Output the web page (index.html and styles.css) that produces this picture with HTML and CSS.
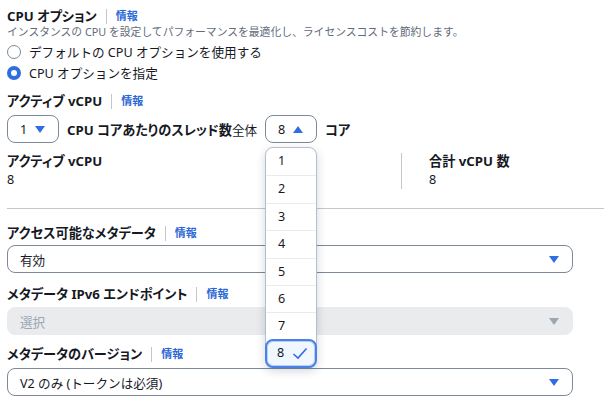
FILE: index.html
```html
<!DOCTYPE html>
<html lang="ja">
<head>
    <meta charset="UTF-8">
    <title>CPU オプション</title>
    <link rel="stylesheet" href="styles.css">
</head>
<body>
    <div class="page">
        <div class="label-row first">
            <span class="label">CPU オプション</span><span class="sep"></span><a class="info">情報</a>
        </div>
        <div class="desc">インスタンスの CPU を設定してパフォーマンスを最適化し、ライセンスコストを節約します。</div>
        <div class="radios">
            <label class="radio"><span class="circle"></span>デフォルトの CPU オプションを使用する</label>
            <label class="radio"><span class="circle checked"></span>CPU オプションを指定</label>
        </div>

        <div class="label-row vcpu">
            <span class="label">アクティブ vCPU</span><span class="sep"></span><a class="info">情報</a>
        </div>
        <div class="core-row">
            <div class="select small">
                <span>1</span>
                <svg class="caret" width="10" height="7" viewBox="0 0 10 7"><polygon points="0,0 10,0 5,7"/></svg>
            </div>
            <span class="label">CPU コアあたりのスレッド数</span><span class="plain">全体</span>
            <div class="select-wrap">
                <div class="select small">
                    <span>8</span>
                    <svg class="caret" width="10" height="7" viewBox="0 0 10 7"><polygon points="0,7 10,7 5,0"/></svg>
                </div>
                <ul class="menu">
                    <li>1</li>
                    <li>2</li>
                    <li>3</li>
                    <li>4</li>
                    <li>5</li>
                    <li>6</li>
                    <li>7</li>
                    <li class="selected">8
                        <svg class="check" width="16" height="13" viewBox="0 0 16 13"><polyline points="1.5,7 6,11 14.5,1.5"/></svg>
                    </li>
                </ul>
            </div>
            <span class="label">コア</span>
        </div>

        <div class="stats">
            <div class="stat">
                <div class="label">アクティブ vCPU</div>
                <div class="value">8</div>
            </div>
            <div class="stat total">
                <div class="label">合計 vCPU 数</div>
                <div class="value">8</div>
            </div>
        </div>
    </div>

    <hr class="divider">

    <div class="page">
        <div class="label-row meta1">
            <span class="label">アクセス可能なメタデータ</span><span class="sep"></span><a class="info">情報</a>
        </div>
        <div class="select wide">
            <span>有効</span>
            <svg class="caret" width="10" height="7" viewBox="0 0 10 7"><polygon points="0,0 10,0 5,7"/></svg>
        </div>

        <div class="label-row meta2">
            <span class="label">メタデータ IPv6 エンドポイント</span><span class="sep"></span><a class="info">情報</a>
        </div>
        <div class="select wide disabled">
            <span>選択</span>
            <svg class="caret" width="10" height="7" viewBox="0 0 10 7"><polygon points="0,0 10,0 5,7"/></svg>
        </div>

        <div class="label-row meta3">
            <span class="label">メタデータのバージョン</span><span class="sep"></span><a class="info">情報</a>
        </div>
        <div class="select wide">
            <span>V2 のみ (トークンは必須)</span>
            <svg class="caret" width="10" height="7" viewBox="0 0 10 7"><polygon points="0,0 10,0 5,7"/></svg>
        </div>
    </div>
</body>
</html>
```

FILE: styles.css
```css
body {
    margin: 0;
    background: #ffffff;
    color: #16191f;
    font-family: "Noto Sans", "Noto Sans CJK JP", sans-serif;
    font-size: 12.6px;
}
.page {
    padding: 0 31px 0 7px;
}
.label {
    font-weight: bold;
    font-size: 13.2px;
    font-feature-settings: "palt";
}
.label-row {
    display: flex;
    align-items: center;
    height: 16px;
    line-height: 16px;
}
.label-row.first {
    padding-top: 8px;
}
.label-row.vcpu {
    margin-top: 10px;
}
.label-row.meta1 {
    margin-top: 16px;
}
.label-row.meta2 {
    margin-top: 13px;
}
.label-row.meta3 {
    margin-top: 11px;
}
.sep {
    display: inline-block;
    width: 1px;
    height: 15px;
    background: #c6c6cd;
    margin: 0 9px;
}
.info {
    color: #2d67d6;
    font-weight: bold;
    font-size: 11px;
}
.desc {
    color: #5f6b7a;
    font-size: 10.8px;
    line-height: 14px;
    margin-top: 1px;
}
.radios {
    margin-top: 2px;
}
.radio {
    display: flex;
    align-items: center;
    height: 21px;
}
.circle {
    box-sizing: border-box;
    width: 14px;
    height: 14px;
    border-radius: 50%;
    border: 1px solid #7d8998;
    margin-right: 8px;
}
.circle.checked {
    border: 4px solid #2f6ee0;
}
.core-row {
    display: flex;
    align-items: center;
    margin-top: 6px;
    height: 28px;
}
.core-row .label {
    margin-left: 8px;
}
.plain {
    margin-right: 8px;
}
.select {
    box-sizing: border-box;
    display: flex;
    align-items: center;
    justify-content: space-between;
    height: 28px;
    border: 1px solid #7d8998;
    border-radius: 8px;
    padding: 0 13px 0 12px;
    background: #ffffff;
}
.select.small {
    width: 52px;
}
.select.wide {
    margin-top: 4px;
}
.meta2 + .select {
    margin-top: 5px;
}
.meta3 + .select {
    margin-top: 6px;
}
.caret {
    fill: #2f6ee0;
}
.select.disabled {
    background: #e9ebed;
    border-color: #e9ebed;
    color: #9ba7b6;
}
.select.disabled .caret {
    fill: #9ba7b6;
}
.select-wrap {
    position: relative;
}
.menu {
    position: absolute;
    top: 32px;
    left: 0;
    z-index: 1;
    box-sizing: border-box;
    width: 52px;
    margin: 0;
    padding: 0;
    list-style: none;
    background: #ffffff;
    border: 1px solid #b6bec9;
    border-radius: 8px;
    box-shadow: 0 3px 10px rgba(0, 30, 60, 0.18);
}
.menu li {
    box-sizing: border-box;
    height: 27.4px;
    line-height: 26.4px;
    padding-left: 12px;
    border-top: 1px solid #e9ebed;
}
.menu li:first-child {
    border-top: none;
}
.menu li.selected {
    display: flex;
    align-items: center;
    gap: 8px;
    padding-left: 10px;
    margin: -1px;
    height: 29px;
    border: 2px solid #4b80e6;
    border-radius: 8px;
    background: #f1f7ff;
    box-shadow: inset 0 0 0 1px #b8cff5;
}
.check {
    fill: none;
    stroke: #2f6ee0;
    stroke-width: 1.6;
}
.stats {
    display: flex;
    margin-top: 10px;
}
.stat {
    flex: none;
    width: 394px;
}
.stat.total {
    flex: 1;
    width: auto;
    border-left: 1px solid #c6c6cd;
    padding-left: 27px;
}
.stat .label {
    line-height: 16px;
}
.stat .value {
    margin-top: 2px;
    line-height: 18px;
}
.divider {
    border: none;
    border-top: 1px solid #c6c6cd;
    margin: 19px 0 0 7px;
}
```
